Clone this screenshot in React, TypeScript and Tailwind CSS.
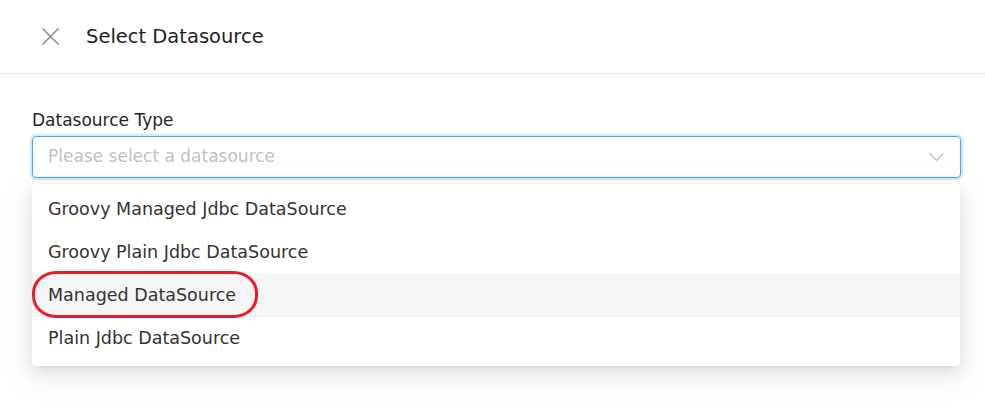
import React from 'react';

const options = [
  'Groovy Managed Jdbc DataSource',
  'Groovy Plain Jdbc DataSource',
  'Managed DataSource',
  'Plain Jdbc DataSource',
];

export default function App() {
  return (
    <div className="w-[985px] h-[412px] bg-white overflow-hidden text-[#262626]" style={{ fontFamily: '"DejaVu Sans", sans-serif' }}>
      {/* header */}
      <div className="h-[74px] flex items-center border-b border-[#ebebeb] pl-[41px]">
        <svg width="19" height="19" viewBox="0 0 19 19" className="text-[#8c8c8c]">
          <path d="M1.5 1.5 L17.5 17.5 M17.5 1.5 L1.5 17.5" stroke="currentColor" strokeWidth="1.6" />
        </svg>
        <span className="ml-[26px] text-[19.5px] text-[#1f1f1f]">Select Datasource</span>
      </div>

      <div className="pl-[32px] pr-[24px] pt-[34px] relative">
        <div className="text-[17px] leading-[24px] text-[#262626]">Datasource Type</div>
        <div className="mt-[4px] h-[42px] rounded-[4px] border border-[#40a9ff] shadow-[0_0_0_2px_rgba(24,144,255,0.2)] flex items-center justify-between pl-[15px] pr-[16px]">
          <span className="text-[17px] text-[#bfbfbf]">Please select a datasource</span>
          <svg width="15" height="10" viewBox="0 0 15 10" className="text-[#bfbfbf]">
            <path d="M1 1.5 L7.5 8.5 L14 1.5" fill="none" stroke="currentColor" strokeWidth="1.4" />
          </svg>
        </div>

        {/* dropdown */}
        <div className="mt-[6px] mr-[1px] bg-white rounded-[4px] pt-[4px] pb-[6px] shadow-[0_3px_6px_-4px_rgba(0,0,0,0.12),0_6px_16px_0_rgba(0,0,0,0.08),0_9px_28px_8px_rgba(0,0,0,0.05)]">
          {options.map((o, i) => (
            <div
              key={o}
              className={`h-[43px] flex items-center px-[16px] text-[17.5px] text-[#333333] ${i === 2 ? 'bg-[#f5f5f5] relative' : ''}`}
            >
              {o}
              {i === 2 && (
                <div className="absolute left-0 top-[-3px] w-[226px] h-[47px] border-[3px] border-[#ed1c24] rounded-[24px/22px]" />
              )}
            </div>
          ))}
        </div>
      </div>
    </div>
  );
}
